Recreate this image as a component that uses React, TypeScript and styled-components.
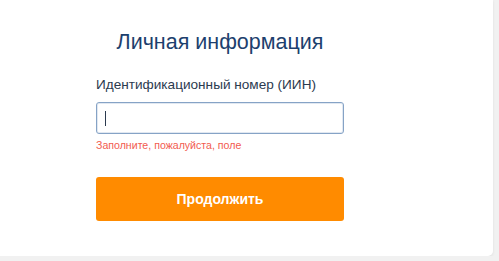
import * as React from 'react'
import styled, { createGlobalStyle } from 'styled-components'

const Global = createGlobalStyle`
  html, body {
    margin: 0;
    padding: 0;
    background: #f1f1f1;
    font-family: "Liberation Sans", Arial, sans-serif;
  }
`

const Card = styled.div`
  box-sizing: border-box;
  width: 493px;
  height: 256px;
  background: #fff;
  border-radius: 0 0 5px 0;
  box-shadow: 0 1px 3px rgba(0, 0, 0, 0.08);
  padding: 29px 0 0 96px;
`

const Form = styled.div`
  width: 248px;
  display: flex;
  flex-direction: column;
`

const Title = styled.h1`
  margin: 0;
  text-align: center;
  font-size: 21.5px;
  font-weight: 400;
  line-height: 26px;
  color: #1d3f6e;
`

const Label = styled.label`
  margin-top: 21px;
  font-size: 13.6px;
  line-height: 18px;
  color: #2b3a4f;
`

const Field = styled.div`
  position: relative;
  margin-top: 8px;
`

const Input = styled.input`
  display: block;
  box-sizing: border-box;
  width: 100%;
  height: 32px;
  border: 1px solid #86a3c6;
  border-radius: 3px;
  padding: 0 9px;
  font-family: inherit;
  font-size: 15px;
  color: #2b3a4f;
  outline: none;
  box-shadow: inset 0 0 0 1px rgba(134, 163, 198, 0.25);
`

const Caret = styled.span`
  position: absolute;
  left: 9px;
  top: 9px;
  width: 1px;
  height: 15px;
  background: #2b3a4f;
`

const Error = styled.div`
  margin-top: 5px;
  font-size: 10.6px;
  line-height: 13px;
  color: #f25b4f;
`

const Button = styled.button`
  margin-top: 25px;
  height: 44px;
  width: 100%;
  border: none;
  border-radius: 3px;
  background: #ff8b00;
  color: #fff;
  font-family: inherit;
  font-size: 14px;
  font-weight: 700;
  cursor: pointer;
`

export default function App() {
  return (
    <>
      <Global />
      <Card>
        <Form>
          <Title>Личная информация</Title>
          <Label>Идентификационный номер (ИИН)</Label>
          <Field>
            <Input />
            <Caret />
          </Field>
          <Error>Заполните, пожалуйста, поле</Error>
          <Button>Продолжить</Button>
        </Form>
      </Card>
    </>
  )
}
